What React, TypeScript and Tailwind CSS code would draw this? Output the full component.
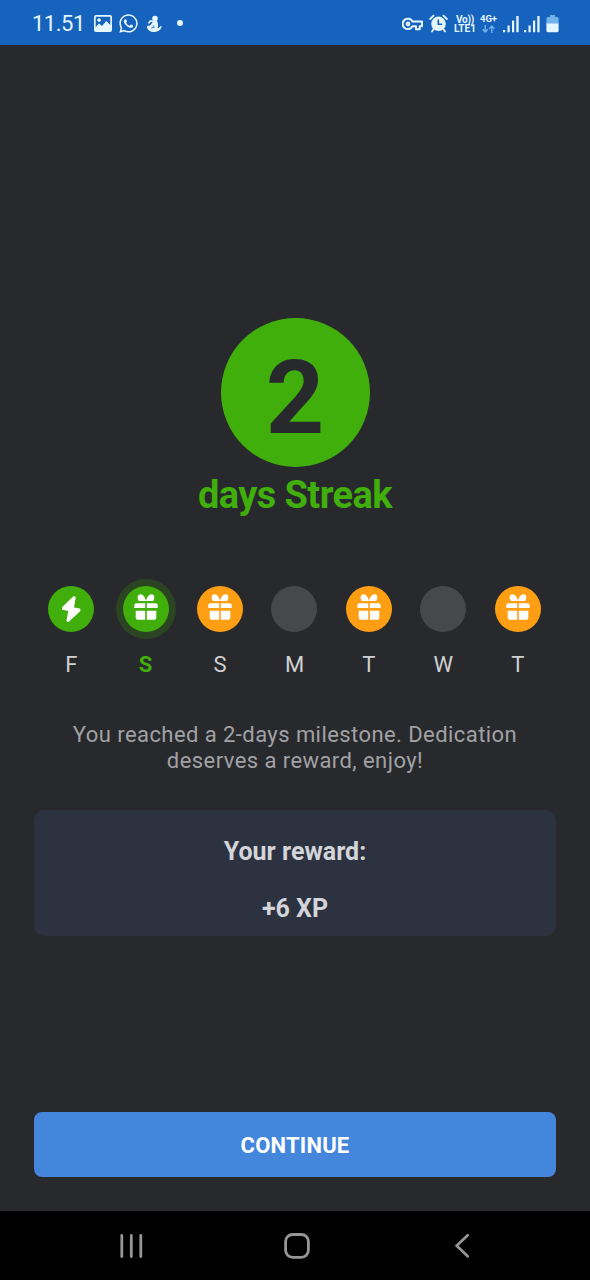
import { FaWhatsapp } from "react-icons/fa"

type DayState = "done" | "today" | "reward" | "empty"

const days: { letter: string; state: DayState }[] = [
  { letter: "F", state: "done" },
  { letter: "S", state: "today" },
  { letter: "S", state: "reward" },
  { letter: "M", state: "empty" },
  { letter: "T", state: "reward" },
  { letter: "W", state: "empty" },
  { letter: "T", state: "reward" },
]

const circleColor: Record<DayState, string> = {
  done: "bg-[#40ae0b]",
  today: "bg-[#40ae0b] ring-[7px] ring-[#2b4422]",
  reward: "bg-[#fe9f13]",
  empty: "bg-[#45494b]",
}

function GiftIcon() {
  return (
    <svg className="mb-[7px]" width="24" height="28" viewBox="0 0 24 28" fill="white">
      <path d="M11.9 8.9C11.2 5.2 9.2 2.2 6.4 2.2 3.6 2.2 2.6 6 4.8 8.9ZM12.1 8.9C12.8 5.2 14.8 2.2 17.6 2.2 20.4 2.2 21.4 6 19.2 8.9Z" />
      <path d="M2.4 11.2H11.2V15.9H.3V13.2Q.3 11.2 2.4 11.2ZM12.8 11.2H21.6Q23.7 11.2 23.7 13.2V15.9H12.8Z" />
      <path d="M1.7 18.8H11.2V27.8H3.7Q1.7 27.8 1.7 25.8ZM12.8 18.8H22.3V25.8Q22.3 27.8 20.3 27.8H12.8Z" />
    </svg>
  )
}

function BoltIcon() {
  return (
    <svg width="20" height="28" viewBox="0 0 20 28" fill="white" stroke="white" strokeWidth="2" strokeLinejoin="round">
      <path d="M12.8 2.2 2 12.6V13.8L8.4 15.2 6.5 25.8H7.4L18.4 15.6V14.6L11.9 13.2 13.7 2.4Z" />
    </svg>
  )
}

function Day({ letter, state }: { letter: string; state: DayState }) {
  return (
    <div className="flex flex-col items-center">
      <div className={`flex size-[46px] items-center justify-center rounded-full ${circleColor[state]}`}>
        {state === "done" && <BoltIcon />}
        {(state === "today" || state === "reward") && <GiftIcon />}
      </div>
      <span
        className={`mt-[19px] text-[22px] leading-7 ${state === "today" ? "font-bold text-[#40ae0b]" : "text-[#d0d1d3]"}`}
      >
        {letter}
      </span>
    </div>
  )
}

function Signal() {
  return (
    <svg width="16" height="18" viewBox="0 0 16 18" fill="currentColor">
      <path d="M0 15h2.2v2.3H0zM4.5 10.5h2.2v6.8H4.5zM9 5.5h2.2v11.8H9zM13.3 1h2.3v16.3h-2.3z" />
    </svg>
  )
}

function StatusBar() {
  return (
    <header className="flex h-[45px] items-center bg-[#1663bd] pt-0.5 pl-8 pr-[31px] text-[#e4f6ff]">
      <span className="w-[62px] text-[22px] leading-none tracking-[-0.5px]">11.51</span>
      <svg width="18" height="17" viewBox="0 0 18 17">
        <path
          fill="currentColor"
          fillRule="evenodd"
          d="M2 0h14q2 0 2 2v13q0 2-2 2H2q-2 0-2-2V2Q0 0 2 0ZM1.7 1.7V12L5 8.5l3 2.5 4.3-5 4 4V1.7ZM5 3.2a1.8 1.8 0 1 0 .1 0Z"
        />
      </svg>
      <FaWhatsapp className="ml-1.5 size-[21px]" />
      <svg className="ml-[7px]" width="17" height="18" viewBox="0 0 17 18" fill="currentColor">
        <circle cx="9" cy="3.5" r="2.8" />
        <path d="M7.2 5.5 4.2 5 1.8 8l1.3.8 2-2 1.6.7-3.1 3.2C1.8 10.2.6 11.3 1 12.8c.8 2.7 3.5 4.2 6.3 4.2 4.2 0 7.4-1.7 8.5-5.5l-1.4-.5c-.7 1.4-1.7 2.1-3 2.4 1.2-2.4.7-5.7-.5-8Z" />
        <path d="m5.2 13.1 3-.7-1-1.8" fill="none" stroke="#1663bd" strokeWidth=".8" />
      </svg>
      <span className="mb-0.5 ml-3.5 size-1.5 rounded-full bg-current" />

      <svg className="ml-auto" width="21" height="14" viewBox="0 0 21 14" fill="none" stroke="currentColor" strokeWidth="2" strokeLinejoin="round">
        <path d="M10.5 4.5A5.2 5.2 0 1 0 10.5 9.3H14v3h3.7v-3H20V4.5Z" />
        <circle cx="6" cy="7" r="1.4" />
      </svg>
      <svg className="ml-1.5" width="19" height="19" viewBox="0 0 19 19" fill="none" stroke="currentColor" strokeLinecap="round">
        <circle cx="9.5" cy="9.8" r="7.3" fill="currentColor" stroke="none" />
        <path strokeWidth="1.8" d="M1.2 5 4.5 1.7M17.8 5 14.5 1.7M4.5 15.3 3 17.5M14.5 15.3 16 17.5" />
        <path stroke="#1663bd" strokeWidth="1.6" d="M9.3 6V10.3H12.5" />
      </svg>
      <div className="ml-1.5 flex w-[23px] flex-col items-center text-[10px] leading-[10px] font-bold">
        <span className="h-[9px] whitespace-nowrap tracking-[-0.3px]">Vo))</span>
        <span className="h-[9px]">LTE1</span>
      </div>
      <div className="ml-[3px] flex w-[18px] flex-col items-center text-[9.5px] leading-[9px] font-bold">
        <span className="whitespace-nowrap">4G+</span>
        <svg className="mt-0.5" width="13" height="8" viewBox="0 0 13 8" fill="none" stroke="#72b1eb" strokeWidth="1.4">
          <path d="M3.2 0v7M.6 4.3 3.2 7l2.6-2.7M9.8 8V1M7.2 3.7 9.8 1l2.6 2.7" />
        </svg>
      </div>
      <div className="ml-[5px] flex gap-[5.5px]">
        <Signal />
        <Signal />
      </div>
      <svg className="ml-1.5" width="13" height="18" viewBox="0 0 13 18">
        <path fill="#72b1eb" d="M4 0h5v2h2q1.6 0 1.6 1.6V9H.4V3.6Q.4 2 2 2h2Z" />
        <path fill="currentColor" d="M.4 8.5h12.2v7.2q0 1.6-1.6 1.6H2q-1.6 0-1.6-1.6Z" />
      </svg>
    </header>
  )
}

function NavBar() {
  return (
    <nav className="flex h-[69px] items-center bg-black pl-[119px] text-[#969696]">
      <svg width="25" height="26" viewBox="0 0 25 26" stroke="currentColor" strokeWidth="2.8" strokeLinecap="round">
        <path d="M2.8 2.5v21M12.3 2.5v21M21.8 2.5v21" />
      </svg>
      <svg className="ml-[140px]" width="26" height="26" viewBox="0 0 26 26" fill="none" stroke="currentColor" strokeWidth="2.8">
        <rect x="1.6" y="1.5" width="22.8" height="22.8" rx="7" />
      </svg>
      <svg className="ml-[144px]" width="16" height="26" viewBox="0 0 16 26" fill="none" stroke="currentColor" strokeWidth="2.7" strokeLinecap="round">
        <path d="M13.7 2.3 2.7 12.8l11 10.5" />
      </svg>
    </nav>
  )
}

export default function App() {
  return (
    <div className="flex h-[1280px] w-[590px] flex-col bg-[#28292c] font-[Roboto,sans-serif]">
      <StatusBar />

      <main className="flex flex-1 flex-col px-[34px] pb-[34px] text-center">
        <div className="mx-auto mt-[273px] flex size-[149px] items-center justify-center rounded-full bg-[#40ae0b]">
          <span className="mt-[10px] text-[102px] leading-none font-bold text-[#28292c]">2</span>
        </div>
        <h1 className="mt-1.5 text-[38px] leading-[44px] font-bold tracking-[-0.6px] text-[#40ae0b]">days Streak</h1>

        <div className="mt-[69px] mr-px grid grid-cols-7">
          {days.map((d, i) => (
            <Day key={i} letter={d.letter} state={d.state} />
          ))}
        </div>

        <p className="mt-[43px] text-[22px] leading-[26px] tracking-[0.43px] text-[#a1a2a5]">
          You reached a 2-days milestone. Dedication
          <br />
          deserves a reward, enjoy!
        </p>

        <section className="mt-9 flex h-[126px] flex-col items-center gap-[29px] rounded-[10px] bg-[#2c323f] pt-[28px] text-[25px] leading-7 font-bold text-[#d3d5da]">
          <p>Your reward:</p>
          <p>+6 XP</p>
        </section>

        <button className="mt-auto h-[65px] rounded-lg bg-[#4386dc] pt-px text-[22px] font-bold tracking-[0.2px] text-white">
          CONTINUE
        </button>
      </main>

      <NavBar />
    </div>
  )
}
